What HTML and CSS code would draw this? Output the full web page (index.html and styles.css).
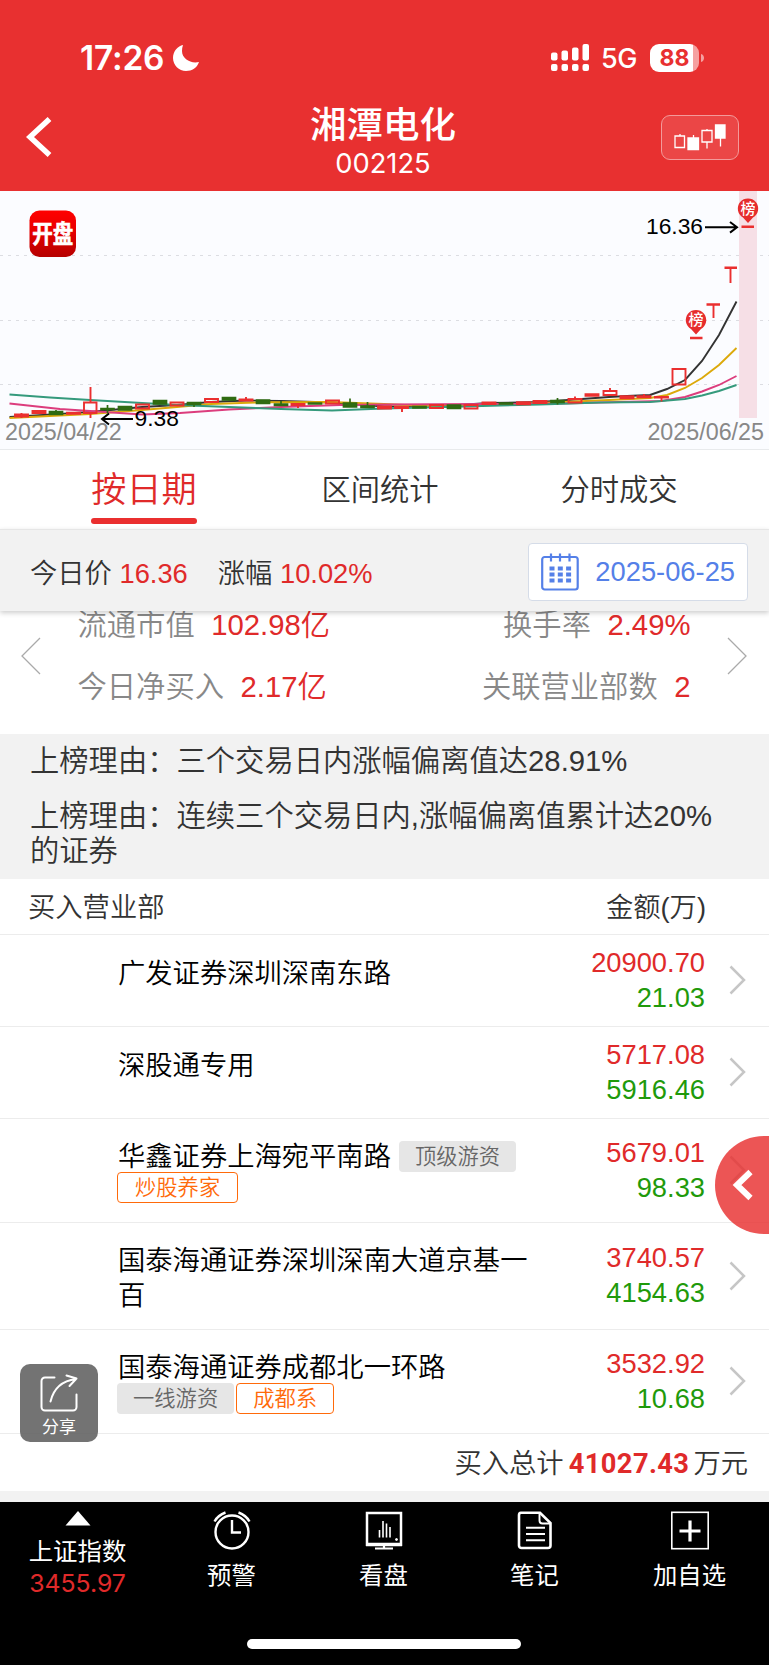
FILE: index.html
```html
<!DOCTYPE html>
<html lang="zh-CN">
<head>
    <meta charset="UTF-8">
    <meta name="viewport" content="width=device-width, initial-scale=1.0">
    <title>湘潭电化 002125</title>
    <link rel="stylesheet" href="styles.css">
</head>
<body>
    <header class="header">
        <div class="status-bar">
            <div class="status-left">
                <span class="clock">17:26</span>
                <svg class="moon" width="26" height="26" viewBox="0 0 26 26"><path d="M10 0C5 1 0 6 0 13c0 7 6 13 13 13 6 0 11-3 13-9-8 2-17-3-17-11 0-2 .3-4 1-6z" fill="#fff"/></svg>
            </div>
            <div class="status-right">
                <svg width="38" height="27" viewBox="0 0 38 27" fill="#fff">
                    <rect x="0" y="8.5" width="6.5" height="8" rx="2"/><rect x="10.5" y="6.5" width="6.5" height="10" rx="2"/><rect x="21" y="3.5" width="6.5" height="13" rx="2"/><rect x="31.5" y="0" width="6.5" height="16.5" rx="2"/>
                    <rect x="0" y="20" width="6.5" height="7" rx="2"/><rect x="10.5" y="20" width="6.5" height="7" rx="2"/><rect x="21" y="20" width="6.5" height="7" rx="2"/><rect x="31.5" y="20" width="6.5" height="7" rx="2"/>
                </svg>
                <span class="network">5G</span>
                <div class="battery"><span>88</span></div>
                <svg class="battery-cap" width="3" height="8" viewBox="0 0 3 8"><path d="M0 0c4 1 4 7 0 8z" fill="#f5a0a0"/></svg>
            </div>
        </div>
        <div class="nav-bar">
            <svg class="back" width="27" height="42" viewBox="0 0 27 42"><path d="M23.5 3L4 21l19.5 18" fill="none" stroke="#fff" stroke-width="5.5"/></svg>
            <div class="stock">
                <h1>湘潭电化</h1>
                <p>002125</p>
            </div>
            <div class="kline-btn">
                <svg width="52" height="27" viewBox="0 0 52 27" fill="none" stroke="#fff" stroke-width="1.3">
                    <path d="M6 10v2M1 12h9.5v11.500H1zM33 5v2M33 18v6.500M28 6.500h10V18H28zM19.500 11v4M46.500 13v9.500"/>
                    <path d="M14 14h10.500v11.500H14zM41.500 1H51v13h-9.500z" fill="#fff"/>
                </svg>
            </div>
        </div>
    </header>

    <section class="chart">
        <svg width="769" height="258" viewBox="0 191 769 258">
            <defs>
                <linearGradient id="logo" x1="0" y1="0" x2="0" y2="1"><stop offset="0" stop-color="#ff0000"/><stop offset=".4" stop-color="#ea0000"/><stop offset="1" stop-color="#b50000"/></linearGradient>
            </defs>
            <path class="grid" d="M0 255.500H769M0 320.500H769M0 384.500H769"/>
            <rect x="739" y="191" width="18" height="227" fill="#f6dfe6"/>

            <!-- moving averages -->
            <path class="ma" stroke="#333" d="M9.500 417L60 414L90 412L142 407L177 405L211 402L246 400.500L281 401L332 402.500L384 406.500L436 406.500L489 403L540 402L575 399.500L609 397L627 396L650 395L667 389L685 380L702 361L719 335L736.500 301.500"/>
            <path class="ma" stroke="#dca90a" d="M9.500 418L90 414L142 410L177 407L211 404L263 402.300L330 402L384 404L436 406.500L489 405L540 403L609 400L650 398L667 395L685 388L702 378L719 365L736.500 348"/>
            <path class="ma" stroke="#dc3d7d" d="M9.500 403.500L60 409L90 411L142 414.500L180 413L229 409.500L281 407L340 405L384 404.500L489 404L560 403.500L620 402L661 401L685 397L702 391.500L719 385L736.500 376"/>
            <path class="ma" stroke="#359a7c" d="M9.500 394.500L50 397.500L90 400L142 403L177 405L229 407L281 409L332 410.500L384 408.500L436 407.300L540 404.500L600 402.500L650 402L685 399L702 395.500L719 391L736.500 385"/>

            <!-- candles -->
            <g class="down">
                <path d="M49.500 411.500h13v3h-13zM101 408.500h13v1h-13zM118.500 406.500h13v3.500h-13zM153.500 400.500h13v3.500h-13zM187.500 402.500h13v2h-13zM222.500 397.500h13v2.500h-13zM256.500 400h13v3.500h-13zM274.500 404h13v1.500h-13zM308.500 403h13v1h-13zM343.500 403h13v4h-13zM361 406h13v1.500h-13zM413 406.500h13v1.500h-13zM447.500 405h13v3.500h-13zM499.500 403h13v1h-13zM551 400.500h13v2h-13z"/>
                <path d="M56 410v2M107.500 405v8M194 404v3M281 401v4M350 398.500v5M367.500 402v4M557.500 398v6.500"/>
            </g>
            <g class="up">
                <path class="solid" d="M15 414.500h13v2h-13zM32.500 411h13v2h-13zM67 412.800h13v1h-13zM239.500 399.500h13v1h-13zM291.500 404h13v1h-13zM378 406.500h13v2h-13zM395 407h13v1h-13zM482.500 402.500h13v1.500h-13zM517 402.200h13v2h-13zM533.500 401h13v2h-13zM585.500 394.200h13v1.500h-13zM620.500 396.200h13v2h-13zM637.500 396.200h13v1h-13zM655 397h13v.5h-13z"/>
                <path d="M84 402.500h12.500v10.500H84zM136 404.500h13v4h-13zM170.500 402.500h13v3h-13zM205 399h13v3h-13zM326 400.500h13v3h-13zM430 405h13v3h-13zM464.500 405h13v3.500h-13zM568.500 399h13v3.500h-13zM603.500 391h13v4h-13zM672.500 369h13v15.500h-13z"/>
                <path d="M21.500 413v5M90.500 387v15M90.500 413v5M246 397v3M298 404v4M402 407v5M575 396.500v2M610 388v3M644 394v3M661.500 397v4.500M713.500 304v14M730.500 268v15"/>
                <path class="limit" d="M690 338h12.500M706.500 304.500h13.500M724.500 267.800h12.500M741.500 226.800h12.500"/>
            </g>

            <!-- price marks -->
            <path d="M133 419h-30M109 413.500l-7 5.500 7 5.500M705 227.300h31M730 222l7 5.300-7 5.300" fill="none" stroke="#000" stroke-width="2"/>
            <text class="mark" x="134.500" y="425.700">9.38</text>
            <text class="mark" x="646" y="234.300">16.36</text>
            <text class="date" x="5" y="440">2025/04/22</text>
            <text class="date" x="764" y="440" text-anchor="end">2025/06/25</text>

            <path d="M748 223l-5-5.500a10.200 10.200 0 1 1 10 0z" fill="#e62d2d"/>
            <text class="pin" x="748" y="213.500">榜</text>
            <path d="M696 334.500l-5-5.500a10.200 10.200 0 1 1 10 0z" fill="#e62d2d"/>
            <text class="pin" x="696" y="325">榜</text>

            <rect x="29.500" y="210.500" width="46.500" height="46.500" rx="10" fill="url(#logo)"/>
            <text class="logo" transform="translate(52.700 242.800) scale(1 1.2)">开盘</text>
        </svg>
    </section>

    <nav class="tabs">
        <div class="tab active"><span>按日期</span></div>
        <div class="tab">区间统计</div>
        <div class="tab">分时成交</div>
    </nav>

    <section class="price-bar">
        <div class="price">今日价 <b>16.36</b></div>
        <div class="price">涨幅 <b>10.02%</b></div>
        <div class="date-box">
            <svg width="38" height="38" viewBox="0 0 38 38" fill="none" stroke="#5580e8" stroke-width="2.2">
                <rect x="1.2" y="4" width="35.5" height="32.5" rx="2.5"/>
                <path d="M10 .5v8M19 .5v8M28.500 .5v8"/>
                <path d="M8.500 15.500h22M8.500 21.500h22M8.500 27.500h22" stroke-width="4" stroke-dasharray="5 3.3"/>
            </svg>
            <span>2025-06-25</span>
        </div>
    </section>

    <section class="stats">
        <svg width="20" height="38" viewBox="0 0 20 38"><path d="M19 1L1 19l18 18" fill="none" stroke="#aaa" stroke-width="1.3"/></svg>
        <div class="stats-grid">
            <div>流通市值<b>102.98亿</b></div>
            <div class="right">换手率<b>2.49%</b></div>
            <div>今日净买入<b>2.17亿</b></div>
            <div class="right">关联营业部数<b>2</b></div>
        </div>
        <svg width="20" height="38" viewBox="0 0 20 38"><path d="M1 1l18 18L1 37" fill="none" stroke="#aaa" stroke-width="1.3"/></svg>
    </section>

    <section class="reasons">
        <p>上榜理由：三个交易日内涨幅偏离值达28.91%</p>
        <p>上榜理由：连续三个交易日内,涨幅偏离值累计达20%的证券</p>
    </section>

    <section class="list">
        <div class="list-head"><span>买入营业部</span><span>金额(万)</span></div>
        <div class="row">
            <div class="dept single"><span>广发证券深圳深南东路</span></div>
            <div class="amount"><p class="buy">20900.70</p><p class="sell">21.03</p></div>
            <svg class="arrow" viewBox="0 0 17 30"><path d="M1.500 1.500L15 15 1.500 28.500"/></svg>
        </div>
        <div class="row">
            <div class="dept single"><span>深股通专用</span></div>
            <div class="amount"><p class="buy">5717.08</p><p class="sell">5916.46</p></div>
            <svg class="arrow" viewBox="0 0 17 30"><path d="M1.500 1.500L15 15 1.500 28.500"/></svg>
        </div>
        <div class="row row-tags">
            <div class="dept tagged"><span>华鑫证券上海宛平南路</span><em class="tag gap">顶级游资</em><em class="tag hot">炒股养家</em></div>
            <div class="amount"><p class="buy">5679.01</p><p class="sell">98.33</p></div>
            <svg class="arrow" viewBox="0 0 17 30"><path d="M1.500 1.500L15 15 1.500 28.500"/></svg>
        </div>
        <div class="row row-wrap">
            <div class="dept"><span>国泰海通证券深圳深南大道京基一百</span></div>
            <div class="amount"><p class="buy">3740.57</p><p class="sell">4154.63</p></div>
            <svg class="arrow" viewBox="0 0 17 30"><path d="M1.500 1.500L15 15 1.500 28.500"/></svg>
        </div>
        <div class="row row-tags">
            <div class="dept tagged"><span>国泰海通证券成都北一环路</span><em class="tag">一线游资</em><em class="tag hot">成都系</em></div>
            <div class="amount"><p class="buy">3532.92</p><p class="sell">10.68</p></div>
            <svg class="arrow" viewBox="0 0 17 30"><path d="M1.500 1.500L15 15 1.500 28.500"/></svg>
        </div>
        <div class="total">买入总计<b>41027.43</b>万元</div>
    </section>

    <div class="side-tab">
        <svg width="22" height="32" viewBox="0 0 22 32"><path d="M18.500 3L5 16l13.500 13" fill="none" stroke="#fff" stroke-width="6"/></svg>
    </div>

    <div class="share">
        <svg width="38" height="38" viewBox="0 0 38 38" fill="none" stroke="#fff" stroke-width="2" stroke-linecap="round" stroke-linejoin="round">
            <path d="M14.500 3.500H5a3.500 3.500 0 0 0-3.500 3.500v26A3.500 3.500 0 0 0 5 36.500h28a3.500 3.500 0 0 0 3.500-3.500V20.500"/>
            <path d="M10.500 27.500C13 17 20 7 36 5M26.500 1.500L36.500 4.500 29.500 12"/>
        </svg>
        <span>分享</span>
    </div>

    <footer class="toolbar">
        <div class="tool index">
            <svg width="26" height="15" viewBox="0 0 26 15"><path d="M13 0l12.500 14.500H.5z" fill="#fff"/></svg>
            <span>上证指数</span>
            <b>3455.97</b>
        </div>
        <div class="tool">
            <svg width="38" height="39" viewBox="0 0 38 39" fill="none" stroke="#fff" stroke-width="2.4">
                <circle cx="19" cy="21" r="16.5"/>
                <path d="M19 9v12.500h9M1.500 10.500C4 6 7 3.500 12.500 1.500M36.500 10.500C34 6 31 3.500 25.500 1.500"/>
            </svg>
            <span>预警</span>
        </div>
        <div class="tool">
            <svg width="38" height="39" viewBox="0 0 38 39" fill="none" stroke="#fff">
                <path d="M2 35V2h34v33" stroke-width="2.5"/>
                <path d="M1 33.500h36" stroke-width="3.5"/>
                <path d="M10 37.500h18M19 34v3" stroke-width="2.2"/>
                <path d="M14.500 19v7.500M18 10v16.500M21.500 12.500v14M25 16v10.500" stroke-width="1.6"/>
                <circle cx="31.5" cy="28.5" r="1" fill="#fff"/>
            </svg>
            <span>看盘</span>
        </div>
        <div class="tool">
            <svg width="38" height="39" viewBox="0 0 38 39" fill="none" stroke="#fff" stroke-width="2.6">
                <path d="M5 1.700h19L34.500 12v22.500a2.500 2.500 0 0 1-2.500 2.500H5.500A2.500 2.500 0 0 1 3 34.500V4a2.300 2.300 0 0 1 2-2.300z"/>
                <path d="M23.500 2v7.500a3 3 0 0 0 3 3h7.500M10 16.700h19M10 23h19M10 29.300h19" stroke-width="1.9"/>
            </svg>
            <span>笔记</span>
        </div>
        <div class="tool">
            <svg width="38" height="39" viewBox="0 0 38 39" fill="none" stroke="#fff">
                <rect x=".8" y="1.3" width="36.4" height="36.4" stroke-width="1.6"/>
                <path d="M19 9.500v21M8.500 20h21" stroke-width="3.2"/>
            </svg>
            <span>加自选</span>
        </div>
        <div class="home-bar"></div>
    </footer>
</body>
</html>
```

FILE: styles.css
```css
* {
    box-sizing: border-box;
    margin: 0;
    padding: 0;
}
body {
    position: relative;
    width: 769px;
    height: 1665px;
    overflow: hidden;
    background: #f2f2f2;
    color: #333;
    font-family: "Liberation Sans", "Noto Sans CJK SC", sans-serif;
    font-size: 27.3px;
    font-weight: 350;
}
svg {
    display: block;
    flex-shrink: 0;
}
b {
    font-weight: 350;
    color: #e02a2a;
}

/* header */
.header {
    height: 191px;
    background: #e83030;
    color: #fff;
    font-family: Inter, "Noto Sans CJK SC", sans-serif;
}
.status-bar {
    display: flex;
    justify-content: space-between;
    align-items: center;
    height: 102px;
    padding: 13px 65px 0 80px;
}
.status-left,
.status-right {
    display: flex;
    align-items: center;
}
.clock {
    width: 93px;
    font-size: 33.5px;
    font-weight: 600;
    letter-spacing: -0.2px;
}
.network {
    width: 37px;
    margin: 2px 12px 0 12px;
    font-size: 27px;
    font-weight: 500;
    letter-spacing: -0.5px;
}
.battery {
    width: 49px;
    height: 28px;
    border-radius: 9px;
    background: linear-gradient(90deg, #fff 43px, #f5a0a0 43px);
    color: #e83030;
    font-size: 23px;
    font-weight: 700;
    line-height: 28px;
    text-align: center;
}
.battery-cap {
    margin-left: 2px;
}
.nav-bar {
    display: flex;
    justify-content: space-between;
    align-items: flex-start;
    padding: 0 30px 0 26px;
}
.back {
    margin-top: 14px;
}
.stock {
    padding-left: 52px;
    text-align: center;
}
.stock h1 {
    font-size: 36.5px;
    font-weight: 500;
    line-height: 47px;
}
.stock p {
    font-size: 27.3px;
    font-weight: 400;
    line-height: 30px;
}
.kline-btn {
    display: flex;
    justify-content: center;
    align-items: center;
    width: 78px;
    height: 45px;
    margin-top: 13px;
    border: 1px solid #f39a9a;
    border-radius: 9px;
    background: #eb4646;
}

/* chart */
.chart {
    height: 258px;
    background: #fbfcff;
}
.grid {
    stroke: #dcdde2;
    stroke-dasharray: 3 5;
}
.ma {
    fill: none;
    stroke-width: 1.9;
}
.down {
    fill: #2f6b12;
    stroke: #2f6b12;
    stroke-width: 1.7;
}
.up {
    fill: none;
    stroke: #ea2f2f;
    stroke-width: 1.9;
}
.solid {
    fill: #ea2f2f;
}
.limit {
    stroke-width: 2.6;
}
.mark {
    font-size: 22.8px;
    fill: #000;
}
.date {
    font-size: 23.3px;
    fill: #888;
}
.pin {
    font-size: 15px;
    font-weight: 500;
    fill: #fff;
    text-anchor: middle;
}
.logo {
    font-size: 20.5px;
    font-weight: 700;
    fill: #fff;
    stroke: #fff;
    stroke-width: 0.5;
    text-anchor: middle;
}

/* tabs */
.tabs {
    display: grid;
    grid-template-columns: 258px 214px 264px;
    height: 80px;
    padding-left: 15px;
    border-top: 1px solid #e8eaec;
    background: #fff;
    text-align: center;
    font-size: 29.3px;
    line-height: 80px;
}
.active span {
    display: inline-block;
    position: relative;
    color: #e02a2a;
    font-size: 35.2px;
}
.active span::after {
    content: "";
    position: absolute;
    bottom: 6px;
    left: 0;
    width: 100%;
    height: 6px;
    border-radius: 3px;
    background: #ea2f2f;
}

/* price bar */
.price-bar {
    position: relative;
    display: flex;
    align-items: center;
    height: 82px;
    padding: 3px 21px 0 30px;
    border-top: 1px solid #e6e6e6;
    background: #f2f2f2;
    box-shadow: 0 2px 5px rgba(0, 0, 0, 0.2);
}
.price {
    margin: -3px 30px 0 0;
}
.date-box {
    display: flex;
    align-items: center;
    justify-content: space-between;
    width: 220px;
    height: 58px;
    margin-left: auto;
    padding: 0 12px;
    border: 1.5px solid #d5dce8;
    border-radius: 4px;
    background: #fff;
    color: #5580e8;
}

/* stats */
.stats {
    display: flex;
    justify-content: space-between;
    height: 123px;
    padding: 26px 22px 0 21px;
    background: #fff;
    color: #888;
    font-size: 29.3px;
}
.stats-grid {
    display: grid;
    grid-template-columns: 1fr 1fr;
    grid-auto-rows: 62px;
    width: 613px;
    margin-top: -43px;
    line-height: 62px;
}
.stats b {
    margin-left: 16.5px;
}
.right {
    text-align: right;
}

/* reasons */
.reasons {
    height: 145px;
    padding: 9px 54px 0 30px;
    font-size: 29.3px;
    line-height: 35px;
}
.reasons p {
    margin-bottom: 20px;
}

/* department list */
.list {
    background: #fff;
}
.list-head {
    display: flex;
    justify-content: space-between;
    height: 56px;
    padding: 0 63px 0 28px;
    border-bottom: 1.5px solid #ececec;
    line-height: 57px;
}
.row {
    display: flex;
    align-items: center;
    height: 92px;
    padding: 0 23px 0 118px;
    border-bottom: 1.5px solid #ececec;
}
.row-tags {
    height: 104px;
}
.row-wrap {
    height: 107px;
}
.dept {
    display: flex;
    flex-wrap: wrap;
    align-items: center;
    width: 415px;
    padding-top: 3px;
    color: #000;
    line-height: 35px;
}
.single {
    padding: 0 0 15px;
}
.tagged {
    line-height: 31px;
}
.tag {
    height: 31px;
    margin-left: -1px;
    padding: 0 16px;
    border-radius: 4px;
    background: #e6e6e6;
    color: #666;
    font-size: 21.3px;
    font-style: normal;
    line-height: 32px;
}
.gap {
    margin-left: 8px;
}
.hot {
    padding: 0 17px;
    border: 1.5px solid #ff6a0a;
    background: #fff;
    color: #ff6a0a;
    line-height: 30px;
}
.tag:not(.gap) + .hot {
    margin-left: 2px;
    padding: 0 16px;
}
.amount {
    flex: 1;
    margin-top: -2px;
    text-align: right;
    line-height: 35px;
}
.buy {
    color: #e02a2a;
}
.sell {
    color: #1f9a0b;
}
.arrow {
    width: 17px;
    height: 30px;
    margin: -1px 0 0 24px;
    fill: none;
    stroke: #c6c6c6;
    stroke-width: 2.5;
}
.total {
    height: 57px;
    padding-right: 21px;
    text-align: right;
    line-height: 60px;
}
.total b {
    margin: 0 4px 0 5px;
    font-family: Roboto, sans-serif;
    font-weight: 700;
    letter-spacing: 0.4px;
}

/* floating buttons */
.side-tab {
    position: absolute;
    top: 1136px;
    right: 0;
    display: flex;
    align-items: center;
    width: 54px;
    height: 98px;
    padding-left: 17px;
    border-radius: 49px 0 0 49px;
    background: rgba(232, 48, 48, 0.82);
}
.share {
    position: absolute;
    top: 1364px;
    left: 20px;
    display: flex;
    flex-direction: column;
    align-items: center;
    width: 78px;
    height: 78px;
    padding-top: 10px;
    border-radius: 10px;
    background: rgba(96, 96, 96, 0.88);
    color: #fff;
    font-size: 17px;
    font-weight: 400;
    line-height: 32px;
}

/* bottom toolbar */
.toolbar {
    position: absolute;
    top: 1502px;
    left: 0;
    display: grid;
    grid-template-columns: 155px 153px 151px 151px 159px;
    width: 769px;
    height: 163px;
    background: #000;
    color: #fff;
    font-size: 24.4px;
    font-weight: 400;
}
.tool {
    display: flex;
    flex-direction: column;
    align-items: center;
    padding-top: 9px;
    line-height: 36px;
}
.tool span {
    margin-top: 8px;
}
.index span {
    margin-top: 7px;
    line-height: 38px;
}
.index b {
    font-family: Inter, sans-serif;
    font-weight: 400;
    font-size: 24.8px;
    line-height: 24px;
}
.home-bar {
    position: absolute;
    bottom: 16px;
    left: 247px;
    width: 274px;
    height: 10px;
    border-radius: 5px;
    background: #fff;
}
```
